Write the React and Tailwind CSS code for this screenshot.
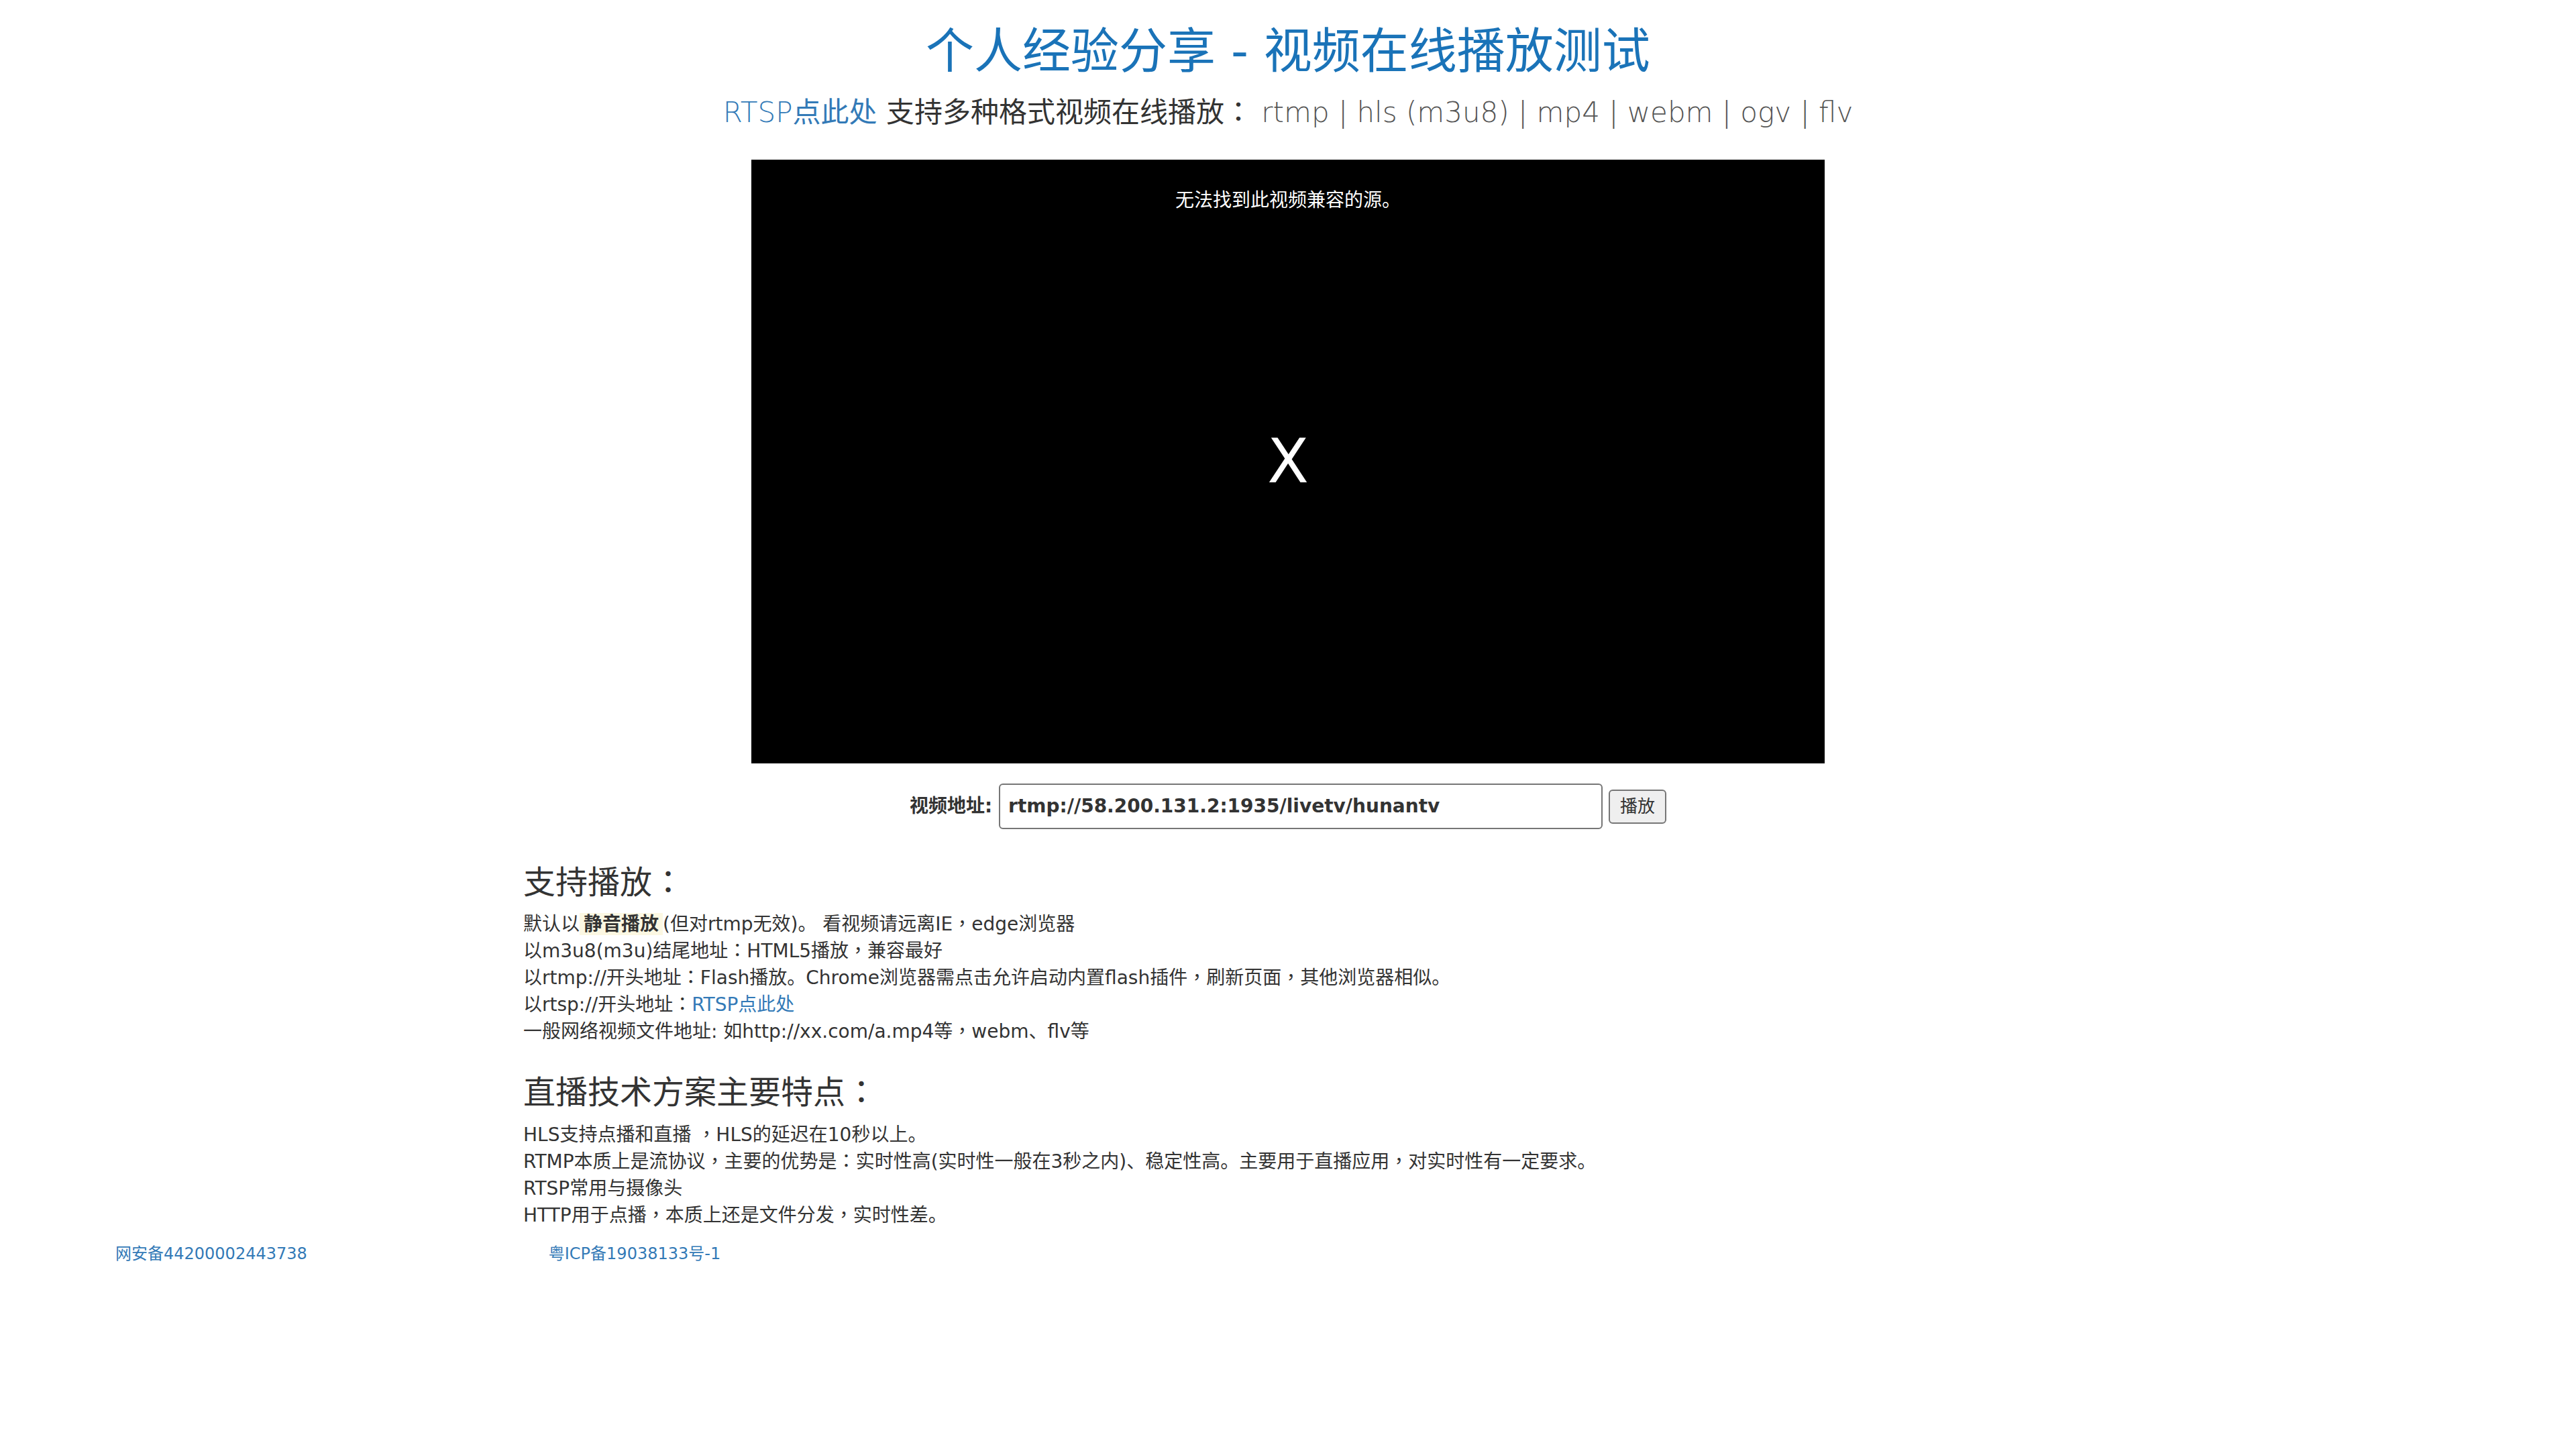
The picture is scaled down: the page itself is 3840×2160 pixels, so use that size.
function P({ c }) {
  return <span className="font-['Noto_Sans_CJK_TC',sans-serif] leading-none">{c}</span>;
}

function L({ children }) {
  return <div className="h-[40px] leading-[40px]">{children}</div>;
}

export default function App() {
  return (
    <div className="w-[3840px] h-[2160px] bg-white text-[#333333] font-['DejaVu_Sans','Noto_Sans_CJK_SC',sans-serif]">
      <h1 className="mt-[31px] h-[90px] text-center text-[72px] leading-[90px] font-normal text-[#1a73b8]">
        个人经验分享 - 视频在线播放测试
      </h1>
      <p className="mt-[17px] h-[60px] text-center text-[42px] leading-[60px] font-extralight text-[#555555]">
        <a className="text-[#337ab7]">RTSP<span className="font-normal">点此处</span></a>{" "}
        <span className="text-[#333333] font-normal">支持多种格式视频在线播放<P c="：" /></span>{" "}
        rtmp | hls (m3u8) | mp4 | webm | ogv | flv
      </p>
      <div className="mt-[40px] mx-auto w-[1600px] h-[900px] bg-black relative flex items-center justify-center">
        <div className="absolute top-[44px] left-0 right-0 text-center text-white text-[28px] leading-[34px]">
          无法找到此视频兼容的源。
        </div>
        <div className="text-white text-[90px] leading-none">X</div>
      </div>
      <div className="mt-[30px] flex items-center justify-center">
        <label className="text-[28px] font-bold mr-[10px]">视频地址:</label>
        <div className="w-[900px] h-[68px] border-2 border-[#767676] rounded-[6px] flex items-center px-[12px] text-[28px] font-bold text-[#333333]">
          rtmp://58.200.131.2:1935/livetv/hunantv
        </div>
        <button className="ml-[9px] h-[51px] px-[15px] bg-[#efefef] border-2 border-[#767676] rounded-[6px] text-[26px] text-[#333333]">
          播放
        </button>
      </div>
      <div className="w-[2340px] mx-auto px-[30px]">
        <h3 className="mt-[51px] h-[53px] text-[48px] leading-[53px] font-normal">支持播放<P c="：" /></h3>
        <div className="mt-[18px] text-[28px]">
          <L>
            默认以<mark className="bg-[#fcf8e3] px-[6px] font-bold text-[#333333]">静音播放</mark>(但对rtmp无效)。 看视频请远离IE<P c="，" />edge浏览器
          </L>
          <L>以m3u8(m3u)结尾地址<P c="：" />HTML5播放<P c="，" />兼容最好</L>
          <L>以rtmp://开头地址<P c="：" />Flash播放。Chrome浏览器需点击允许启动内置flash插件<P c="，" />刷新页面<P c="，" />其他浏览器相似。</L>
          <L>
            以rtsp://开头地址<P c="：" /><a className="text-[#337ab7]">RTSP点此处</a>
          </L>
          <L>一般网络视频文件地址: 如http://xx.com/a.mp4等<P c="，" />webm、flv等</L>
        </div>
        <h3 className="mt-[42px] h-[53px] text-[48px] leading-[53px] font-normal">直播技术方案主要特点<P c="：" /></h3>
        <div className="mt-[19px] text-[28px]">
          <L>HLS支持点播和直播 <P c="，" />HLS的延迟在10秒以上。</L>
          <L>RTMP本质上是流协议<P c="，" />主要的优势是<P c="：" />实时性高(实时性一般在3秒之内)、稳定性高。主要用于直播应用<P c="，" />对实时性有一定要求。</L>
          <L>RTSP常用与摄像头</L>
          <L>HTTP用于点播<P c="，" />本质上还是文件分发<P c="，" />实时性差。</L>
        </div>
      </div>
      <div className="mt-[20px] flex text-[24px] leading-[34px] text-[#337ab7]">
        <a className="ml-[172px]">网安备44200002443738</a>
        <a className="ml-[360px]">粤ICP备19038133号-1</a>
      </div>
    </div>
  );
}
